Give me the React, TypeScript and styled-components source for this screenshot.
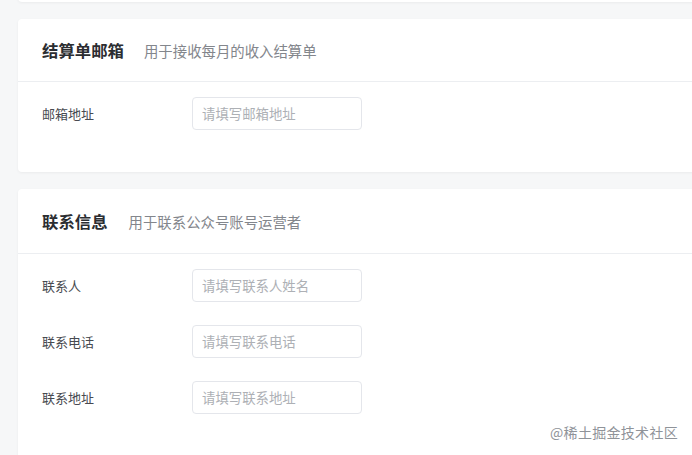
import * as React from 'react'
import styled, { createGlobalStyle } from 'styled-components'

const GlobalStyle = createGlobalStyle`
  html, body {
    margin: 0;
    padding: 0;
    background: #f6f7f8;
    overflow: hidden;
    font-family: "Noto Sans CJK SC", "Noto Sans", sans-serif;
  }
`

const Page = styled.div`
  box-sizing: border-box;
  position: relative;
  width: 692px;
  height: 495px;
  overflow: hidden;
  display: flex;
  flex-direction: column;
  gap: 17px;
  padding: 0 0 0 18px;
  margin-top: -40px;
`

const Card = styled.section`
  box-sizing: border-box;
  width: 700px;
  flex-shrink: 0;
  background: #fff;
  border-radius: 4px;
  box-shadow: 0 1px 3px rgba(0, 0, 0, 0.05);
`

const TopCard = styled(Card)`
  height: 42px;
`

const Header = styled.div<{ $height: number }>`
  box-sizing: border-box;
  height: ${p => p.$height}px;
  display: flex;
  align-items: center;
  padding: 0 24px;
  border-bottom: 1px solid #eceef1;
`

const Title = styled.h3`
  margin: 0;
  font-size: 16.4px;
  font-weight: 700;
  color: #2b2d31;
`

const Subtitle = styled.span<{ $gap: number }>`
  margin-left: ${p => p.$gap}px;
  font-size: 14.4px;
  color: #83868c;
`

const Body = styled.div<{ $bottom: number }>`
  display: flex;
  flex-direction: column;
  gap: 24px;
  padding: 15px 24px ${p => p.$bottom}px;
`

const Row = styled.div`
  display: flex;
  align-items: center;
  height: 32px;
`

const Label = styled.label`
  width: 150px;
  font-size: 13px;
  color: #474a50;
`

const Input = styled.input`
  box-sizing: border-box;
  width: 170px;
  height: 33px;
  padding: 0 9px;
  border: 1px solid #e4e6eb;
  border-radius: 4px;
  font-family: inherit;
  font-size: 13.4px;
  color: #252933;
  outline: none;
  &::placeholder {
    color: #adb0b5;
  }
`

const Watermark = styled.div`
  position: absolute;
  right: 14px;
  bottom: 13px;
  font-size: 14px;
  color: #8f9399;
  letter-spacing: 0.3px;
`

interface IField {
  label: string
  placeholder: string
}

interface ISection {
  title: string
  desc: string
  gap: number
  head: number
  bottom: number
  fields: IField[]
}

const Section = (props: ISection) => (
  <Card>
    <Header $height={props.head}>
      <Title>{props.title}</Title>
      <Subtitle $gap={props.gap}>{props.desc}</Subtitle>
    </Header>
    <Body $bottom={props.bottom}>
      {props.fields.map(f => (
        <Row key={f.label}>
          <Label>{f.label}</Label>
          <Input type="text" placeholder={f.placeholder} />
        </Row>
      ))}
    </Body>
  </Card>
)

export default () => (
  <>
    <GlobalStyle />
    <Page>
      <TopCard />
      <Section
        title="结算单邮箱"
        desc="用于接收每月的收入结算单"
        gap={20}
        head={63}
        bottom={43}
        fields={[{ label: '邮箱地址', placeholder: '请填写邮箱地址' }]}
      />
      <Section
        title="联系信息"
        desc="用于联系公众号账号运营者"
        gap={21}
        head={65}
        bottom={80}
        fields={[
          { label: '联系人', placeholder: '请填写联系人姓名' },
          { label: '联系电话', placeholder: '请填写联系电话' },
          { label: '联系地址', placeholder: '请填写联系地址' },
        ]}
      />
      <Watermark>@稀土掘金技术社区</Watermark>
    </Page>
  </>
)
